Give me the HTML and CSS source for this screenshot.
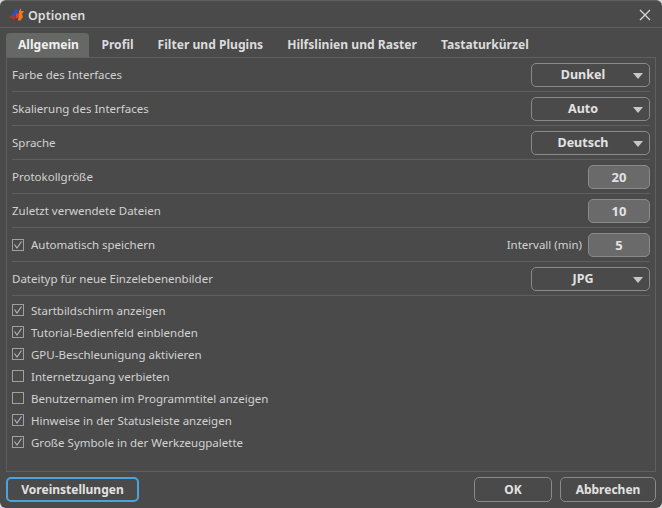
FILE: index.html
```html
<!DOCTYPE html>
<html lang="de">
<head>
    <meta charset="UTF-8">
    <meta name="viewport" content="width=device-width, initial-scale=1.0">
    <title>Optionen</title>
    <link rel="stylesheet" href="styles.css">
</head>
<body>

    <div class="dialog">
        <div class="titlebar">
            <svg class="logo" width="16" height="14" viewBox="0 0 16 14">
                <path d="M0 10 L4 6 L7 9 L5 12 L3 10 Z" fill="#d8261c"/>
                <path d="M3 7 L5 4 L7 0 L9 4 L9 8 L6 9 Z" fill="#2a55c8"/>
                <path d="M10 3 L12 0 L12 3 L15 3 L13 6 L14 9 L11 13 L9 12 L10 8 Z" fill="#ee7a1c"/>
                <path d="M7 6 L10 5 L10 10 L7 10 Z" fill="#e8401c"/>
            </svg>
            <span class="title">Optionen</span>
            <svg class="close" width="12" height="12" viewBox="0 0 12 12">
                <path d="M1 1 L11 11 M11 1 L1 11" stroke="#d6d6d6" stroke-width="1.3" fill="none"/>
            </svg>
        </div>

        <div class="tabs">
            <div class="tab active">Allgemein</div>
            <div class="tab">Profil</div>
            <div class="tab">Filter und Plugins</div>
            <div class="tab">Hilfslinien und Raster</div>
            <div class="tab">Tastaturkürzel</div>
        </div>

        <div class="panel">
            <div class="row">
                <span>Farbe des Interfaces</span>
                <div class="select">Dunkel</div>
            </div>
            <div class="row">
                <span>Skalierung des Interfaces</span>
                <div class="select">Auto</div>
            </div>
            <div class="row">
                <span>Sprache</span>
                <div class="select">Deutsch</div>
            </div>
            <div class="row">
                <span>Protokollgröße</span>
                <div class="number">20</div>
            </div>
            <div class="row">
                <span>Zuletzt verwendete Dateien</span>
                <div class="number">10</div>
            </div>
            <div class="row">
                <label class="check on">Automatisch speichern</label>
                <div class="interval">
                    <span>Intervall (min)</span>
                    <div class="number">5</div>
                </div>
            </div>
            <div class="row">
                <span>Dateityp für neue Einzelebenenbilder</span>
                <div class="select">JPG</div>
            </div>

            <div class="checks">
                <label class="check on">Startbildschirm anzeigen</label>
                <label class="check on">Tutorial-Bedienfeld einblenden</label>
                <label class="check on">GPU-Beschleunigung aktivieren</label>
                <label class="check">Internetzugang verbieten</label>
                <label class="check">Benutzernamen im Programmtitel anzeigen</label>
                <label class="check on">Hinweise in der Statusleiste anzeigen</label>
                <label class="check on">Große Symbole in der Werkzeugpalette</label>
            </div>
        </div>

        <div class="footer">
            <button class="btn focus">Voreinstellungen</button>
            <div class="right">
                <button class="btn ok">OK</button>
                <button class="btn cancel">Abbrechen</button>
            </div>
        </div>
    </div>

</body>
</html>
```

FILE: styles.css
```css
html, body {
    margin: 0;
    padding: 0;
    background-color: #d8d8d8;
}
body {
    width: 662px;
    height: 508px;
    overflow: hidden;
    font-family: "Noto Sans", "DejaVu Sans", sans-serif;
    font-size: 11.5px;
    color: #d2d2d2;
}
.dialog {
    box-sizing: border-box;
    width: 662px;
    height: 508px;
    padding: 0 6px;
    background-color: #4a4a4a;
    border-radius: 6px;
    border-top: 1px solid #5e5e5e;
}
.titlebar {
    display: flex;
    align-items: center;
    height: 27px;
    margin: 0 -6px;
    padding: 2px 11px 0 9px;
    box-sizing: border-box;
    border-bottom: 1px solid #5f5f5f;
}
.logo {
    margin-right: 3px;
}
.title {
    flex: 1;
    font-size: 12.5px;
    font-weight: 600;
    color: #dcdcdc;
}
.tabs {
    display: flex;
    height: 24px;
    margin-top: 5px;
    border-bottom: 1px solid #5f5f5f;
}
.tab {
    padding: 0 12px;
    line-height: 24px;
    font-size: 12.1px;
    font-weight: 700;
    color: #dcdcdc;
}
.tab.active {
    padding-right: 10.5px;
    background-color: #666866;
    border-radius: 4px 4px 0 0;
    color: #f0f0f0;
}
.panel {
    box-sizing: border-box;
    height: 414px;
    padding: 0 5px;
    border: 1px solid #5f5f5f;
    border-top: none;
}
.row {
    display: flex;
    align-items: center;
    justify-content: space-between;
    box-sizing: border-box;
    height: 34px;
    border-bottom: 1px solid #5f5f5f;
}
.select, .number {
    box-sizing: border-box;
    height: 24px;
    line-height: 22px;
    border: 1px solid #8a8a8a;
    border-radius: 5px;
    text-align: center;
    font-size: 12.5px;
    font-weight: 700;
    color: #e2e2e2;
}
.select {
    position: relative;
    width: 119px;
    padding-right: 15px;
}
.select::after {
    content: "";
    position: absolute;
    right: 6px;
    top: 9px;
    border-left: 5px solid transparent;
    border-right: 5px solid transparent;
    border-top: 6px solid #c8c8c8;
}
.number {
    width: 62px;
    background-color: #6a6a6a;
    font-size: 13px;
}
.interval {
    display: flex;
    align-items: center;
    gap: 6px;
}
.check {
    display: flex;
    align-items: center;
    height: 22px;
}
.check::before {
    content: "";
    box-sizing: border-box;
    width: 12px;
    height: 12px;
    margin-right: 7px;
    border: 1px solid #a0a0a0;
}
.check.on::before {
    background: url("data:image/svg+xml,%3Csvg xmlns='http://www.w3.org/2000/svg' width='10' height='10'%3E%3Cpath d='M1.5 4.5 L4 8 L8.5 1.5' stroke='%23b4b4b4' stroke-width='1.2' fill='none'/%3E%3C/svg%3E") no-repeat center;
}
.checks {
    padding-top: 3px;
}
.footer {
    display: flex;
    justify-content: space-between;
    margin-top: 5px;
}
.right {
    display: flex;
    gap: 8px;
}
.btn {
    box-sizing: border-box;
    height: 25px;
    padding: 0;
    background: none;
    border: 1px solid #8a8a8a;
    border-radius: 5px;
    font-family: inherit;
    font-size: 12px;
    font-weight: 700;
    color: #e2e2e2;
}
.btn.focus {
    width: 133px;
    border: 2px solid #4ba3dc;
}
.btn.ok {
    width: 78px;
}
.btn.cancel {
    width: 96px;
}
```
